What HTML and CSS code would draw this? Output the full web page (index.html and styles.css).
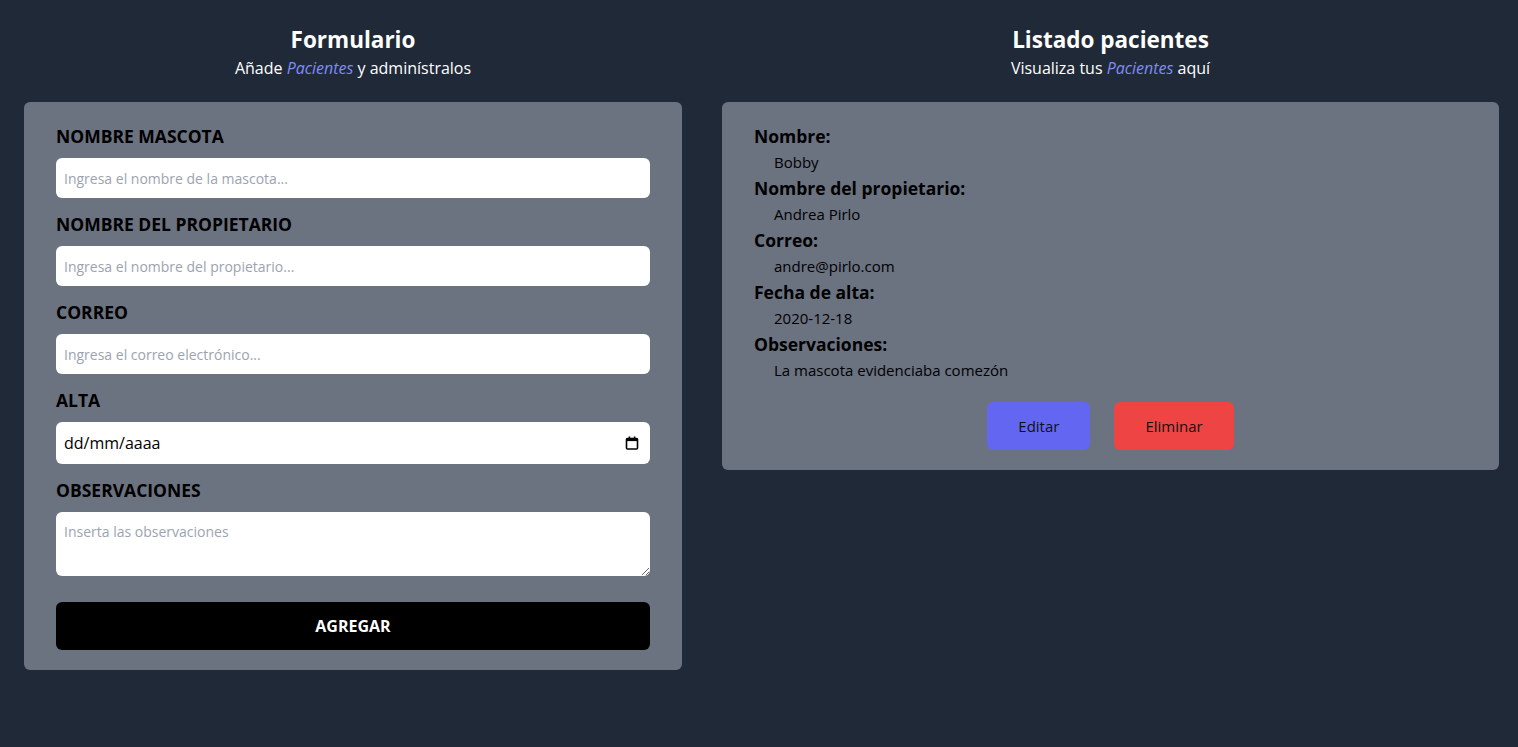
FILE: index.html
```html
<!DOCTYPE html>
<html lang="es">
<head>
<meta charset="utf-8">
<title>Pacientes</title>
<link rel="stylesheet" href="styles.css">
</head>
<body>
<main class="layout">
  <section class="col col-form">
    <h2 class="title">Formulario</h2>
    <p class="subtitle">Añade <em class="accent">Pacientes</em> y adminístralos</p>
    <form class="card form-card">
      <label class="label">NOMBRE MASCOTA</label>
      <input class="field" type="text" placeholder="Ingresa el nombre de la mascota...">
      <label class="label">NOMBRE DEL PROPIETARIO</label>
      <input class="field" type="text" placeholder="Ingresa el nombre del propietario...">
      <label class="label">CORREO</label>
      <input class="field" type="text" placeholder="Ingresa el correo electrónico...">
      <label class="label">ALTA</label>
      <div class="field date-field">
        <span class="date-text">dd/mm/aaaa</span>
        <svg class="cal-icon" width="14" height="14" viewBox="0 0 14 14" aria-hidden="true">
          <rect x="1.5" y="2.5" width="11" height="10.5" rx="1" fill="none" stroke="#000" stroke-width="1.6"/>
          <rect x="1.5" y="2.5" width="11" height="2.6" fill="#000"/>
          <rect x="3.6" y="0.5" width="1.6" height="2.5" fill="#000"/>
          <rect x="8.8" y="0.5" width="1.6" height="2.5" fill="#000"/>
        </svg>
      </div>
      <label class="label">OBSERVACIONES</label>
      <textarea class="field area" placeholder="Inserta las observaciones"></textarea>
      <button type="button" class="btn-submit">AGREGAR</button>
    </form>
  </section>
  <section class="col col-list">
    <h2 class="title">Listado pacientes</h2>
    <p class="subtitle">Visualiza tus <em class="accent">Pacientes</em> aquí</p>
    <div class="card list-card">
      <dl class="info">
        <dt>Nombre:</dt>
        <dd>Bobby</dd>
        <dt>Nombre del propietario:</dt>
        <dd>Andrea Pirlo</dd>
        <dt>Correo:</dt>
        <dd>andre@pirlo.com</dd>
        <dt>Fecha de alta:</dt>
        <dd>2020-12-18</dd>
        <dt>Observaciones:</dt>
        <dd>La mascota evidenciaba comezón</dd>
      </dl>
      <div class="actions">
        <button type="button" class="btn btn-edit">Editar</button>
        <button type="button" class="btn btn-del">Eliminar</button>
      </div>
    </div>
  </section>
</main>
</body>
</html>
```

FILE: styles.css
```css
* { box-sizing: border-box; }
html, body { margin: 0; padding: 0; }
body {
  background: #1f2937;
  font-family: "Open Sans", "Noto Sans", sans-serif;
  color: #000;
  min-height: 747px;
}
.layout {
  display: flex;
  gap: 40px;
  padding: 24px 19px 0 24px;
  align-items: flex-start;
}
.col-form { width: 658px; flex: none; }
.col-list { flex: 1; }
.title {
  margin: 0;
  text-align: center;
  color: #fff;
  font-size: 22.5px;
  line-height: 32px;
  font-weight: 700;
}
.subtitle {
  margin: 0 0 22px;
  text-align: center;
  color: #fff;
  font-size: 16px;
  line-height: 24px;
}
.accent { color: #818cf8; font-style: italic; }
.card {
  background: #6b7280;
  border-radius: 6px;
  padding: 20px 32px;
}
.form-card { display: flex; flex-direction: column; }
.label {
  display: block;
  font-size: 17.5px;
  line-height: 28px;
  font-weight: 700;
  margin-bottom: 8px;
}
.field {
  display: block;
  width: 100%;
  height: 40px;
  border: none;
  border-radius: 6px;
  background: #fff;
  padding: 0 8px;
  font-family: inherit;
  font-size: 14px;
  color: #000;
  margin-bottom: 12px;
  outline: none;
}
.field::placeholder { color: #9ca3af; }
.date-field {
  height: 42px;
  display: flex;
  align-items: center;
  justify-content: space-between;
  padding: 0 11px 0 8px;
}
.date-text { font-size: 16px; }
.area {
  height: 64px;
  padding: 10px 8px;
  resize: vertical;
  margin-bottom: 26px;
}
.btn-submit {
  height: 48px;
  width: 100%;
  border: none;
  border-radius: 6px;
  background: #000;
  color: #fff;
  font-family: inherit;
  font-weight: 700;
  font-size: 16px;
}
.info { margin: 0; }
.info dt {
  font-size: 17.5px;
  line-height: 28px;
  font-weight: 700;
}
.info dd {
  margin: 0 0 0 20px;
  font-size: 15px;
  line-height: 24px;
}
.actions {
  display: flex;
  justify-content: center;
  gap: 24px;
  margin-top: 20px;
}
.btn {
  height: 48px;
  border: none;
  border-radius: 6px;
  padding: 0 31px;
  font-family: inherit;
  font-size: 15px;
  color: #111;
}
.btn-edit { background: #6366f1; }
.btn-del { background: #ef4444; }
```
